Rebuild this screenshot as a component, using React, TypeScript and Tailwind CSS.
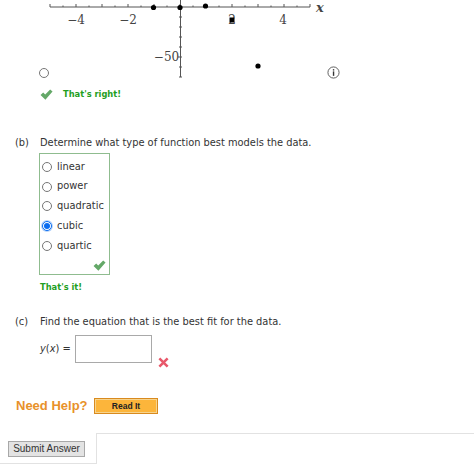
import React from "react";

const font = { fontFamily: '"DejaVu Sans", Verdana, sans-serif' };

function Check({ className }: { className?: string }) {
  return (
    <svg viewBox="0 0 14 12" className={className}>
      <path d="M0.5 6.5 L3.4 3.8 L5.6 6 L11 0.6 L13.6 2.6 L5.8 11.6 Z" fill="#64a868" />
    </svg>
  );
}

function Radio({ checked }: { checked?: boolean }) {
  return checked ? (
    <span className="w-[10px] h-[10px] rounded-full border border-[#0a6cf0] bg-white flex items-center justify-center shrink-0 shadow-[0_0_0_1px_#b9d6fb]">
      <span className="w-[6px] h-[6px] rounded-full bg-[#0a6cf0]" />
    </span>
  ) : (
    <span className="w-[10px] h-[10px] rounded-full border border-[#767676] bg-white shrink-0" />
  );
}

function Graph() {
  const minor: number[] = [];
  for (let x = 50; x <= 310; x += 13) minor.push(x);
  const labels = [
    [76, "−4"],
    [128, "−2"],
    [283, "4"],
  ] as const;
  return (
    <svg width="474" height="66" viewBox="0 0 474 66" className="block overflow-visible">
      <line x1="50" y1="7" x2="310" y2="7" stroke="#555" strokeWidth="1" />
      <line x1="180.5" y1="0" x2="180.5" y2="77" stroke="#555" strokeWidth="1" />
      {minor.map((x) => (
        <line key={x} x1={x} y1={(x - 50) % 26 === 0 ? 4 : 5.5} x2={x} y2="7" stroke="#555" strokeWidth="1" />
      ))}
      {[17, 27, 37, 47, 57, 67, 77].map((y) => (
        <line key={y} x1={y === 57 ? 178 : 179} y1={y} x2="182" y2={y} stroke="#555" strokeWidth="1" />
      ))}
      <g fill="#444" fontFamily='"DejaVu Serif", serif' fontSize="12" textAnchor="middle" fontWeight="500">
        {labels.map(([x, t]) => (
          <text key={t} x={x} y="24">{t}</text>
        ))}
        <text x="232" y="24">2</text>
        <text x="166.5" y="61">−50</text>
        <text x="320" y="12" fontSize="13" fontStyle="italic" fontWeight="700">x</text>
      </g>
      <g fill="#000">
        <circle cx="153.5" cy="7.5" r="2.6" />
        <circle cx="180" cy="7.5" r="2.6" />
        <circle cx="205.5" cy="6" r="2.6" />
        <rect x="229.5" y="17.5" width="5" height="5" />
        <circle cx="258" cy="66" r="2.6" />
      </g>
    </svg>
  );
}

export default function App() {
  const opts = ["linear", "power", "quadratic", "cubic", "quartic"];
  return (
    <div className="w-[474px] h-[475px] bg-white overflow-hidden text-[9.85px] text-[#333]" style={font}>
      <Graph />
      <div className="relative h-[14px] pl-[39px] flex items-center">
        <Radio />
        <svg viewBox="0 0 14 14" className="absolute left-[327px] top-[0px] w-[13px] h-[13px]">
          <circle cx="7" cy="7" r="6" fill="none" stroke="#555" />
          <rect x="6.3" y="5.8" width="1.5" height="4.8" fill="#333" />
          <rect x="6.3" y="3.4" width="1.5" height="1.5" fill="#333" />
        </svg>
      </div>
      <div className="flex items-center pl-[40px] mt-[7px] h-[14px]">
        <Check className="w-[13px] h-[11px]" />
        <span className="ml-[10px] text-[8.3px] font-bold text-[#1fa01f]">That's right!</span>
      </div>

      <div className="flex mt-[35px] pl-[15px] leading-[14px]">
        <span className="w-[25px]">(b)</span>
        <span>Determine what type of function best models the data.</span>
      </div>
      <div className="ml-[39px] mt-[3px] w-[71px] h-[122px] border border-[#8fbc8f] relative pl-[2px] pt-[3px]">
        {opts.map((o, i) => (
          <div key={o} className="flex items-center h-[19.8px] gap-[5px]">
            <Radio checked={i === 3} />
            <span>{o}</span>
          </div>
        ))}
        <Check className="absolute right-[3px] bottom-[3px] w-[13px] h-[11px]" />
      </div>
      <div className="ml-[40px] mt-[6px] text-[8.3px] font-bold text-[#1fa01f] leading-[12px]">That's it!</div>

      <div className="flex mt-[22px] pl-[15px] leading-[14px]">
        <span className="w-[25px]">(c)</span>
        <span>Find the equation that is the best fit for the data.</span>
      </div>
      <div className="flex items-center mt-[6px] pl-[40px] h-[28px] relative">
        <span className="w-[35px] whitespace-nowrap">
          <i>y</i>(<i>x</i>) =
        </span>
        <div className="w-[77px] h-[28px] border border-[#a9a9a9] bg-white" />
        <svg viewBox="0 0 12 12" className="absolute left-[158px] top-[22px] w-[11px] h-[11px]">
          <path d="M1.5 1.5 L10.5 10.5 M10.5 1.5 L1.5 10.5" stroke="#e8586a" strokeWidth="2.8" />
        </svg>
      </div>

      <div className="flex items-center mt-[35px] pl-[16px] h-[16px]">
        <span className="text-[13px] font-bold text-[#e8912a] w-[78px] whitespace-nowrap" style={{ fontFamily: '"Liberation Sans", Arial, sans-serif' }}>
          Need Help?
        </span>
        <button
          className="w-[64px] h-[16px] border border-[#d98a1e] bg-[#fcb53b] shadow-[inset_0_0_0_1px_#f7d48d] text-[8.5px] font-bold text-[#222] leading-none"
          style={{ fontFamily: '"Liberation Sans", Arial, sans-serif' }}
        >
          Read It
        </button>
      </div>

      <div className="flex mt-[19px]">
        <div className="w-[97px] h-[31px] border-r border-b border-[#e2e2e2] pl-[8px] pt-[8px]">
          <button
            className="block w-[77px] h-[16px] bg-[#e3e3e3] border border-[#a8a8a8] text-[10px] text-[#333] leading-none whitespace-nowrap"
            style={{ fontFamily: '"Liberation Sans", Arial, sans-serif' }}
          >
            Submit Answer
          </button>
        </div>
        <div className="flex-1 h-[1px] bg-[#e2e2e2]" />
      </div>
    </div>
  );
}
